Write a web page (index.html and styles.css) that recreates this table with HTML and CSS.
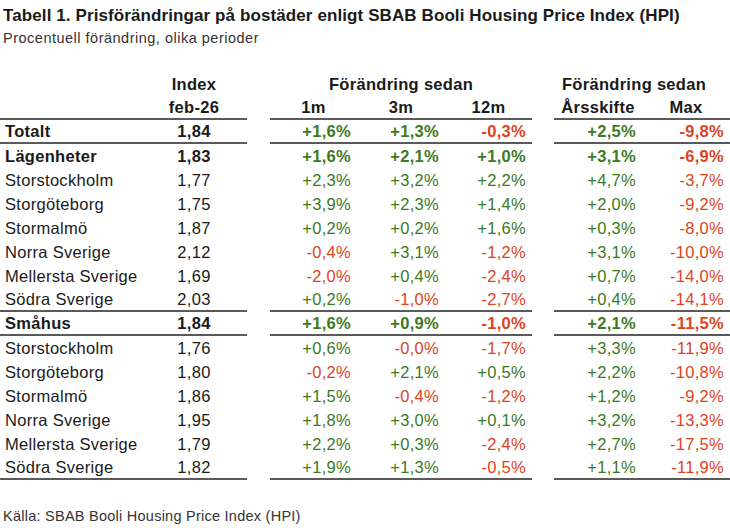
FILE: index.html
```html
<!DOCTYPE html>
<html lang="sv">
<head>
<meta charset="utf-8">
<title>Tabell 1</title>
<link rel="stylesheet" href="styles.css">
</head>
<body>
<div class="page">
  <h1 class="title">Tabell 1. Prisförändringar på bostäder enligt SBAB Booli Housing Price Index (HPI)</h1>
  <p class="subtitle">Procentuell förändring, olika perioder</p>
  <table class="hpi">
    <colgroup>
      <col class="c-label"><col class="c-index"><col class="c-gap1">
      <col class="c-v"><col class="c-v2"><col class="c-v"><col class="c-gap2">
      <col class="c-v2"><col class="c-v2">
    </colgroup>
    <thead>
      <tr class="h1">
        <th></th><th class="ctr">Index</th><th></th>
        <th colspan="3" class="ctr">Förändring sedan</th><th></th>
        <th colspan="2" class="grp2">Förändring sedan</th>
      </tr>
      <tr class="h2">
        <th class="rule"></th><th class="ctr rule">feb-26</th><th></th>
        <th class="ctr rule">1m</th><th class="ctr rule">3m</th><th class="ctr rule">12m</th><th></th>
        <th class="ctr rule">Årsskifte</th><th class="ctr rule">Max</th>
      </tr>
    </thead>
    <tbody>
      <tr class="bold ruled"><td class="lbl">Totalt</td><td class="ctr">1,84</td><td class="gap"></td><td class="up">+1,6%</td><td class="up">+1,3%</td><td class="dn">-0,3%</td><td class="gap"></td><td class="up">+2,5%</td><td class="dn">-9,8%</td></tr>
      <tr class="bold"><td class="lbl">Lägenheter</td><td class="ctr">1,83</td><td class="gap"></td><td class="up">+1,6%</td><td class="up">+2,1%</td><td class="up">+1,0%</td><td class="gap"></td><td class="up">+3,1%</td><td class="dn">-6,9%</td></tr>
      <tr><td class="lbl">Storstockholm</td><td class="ctr">1,77</td><td class="gap"></td><td class="up">+2,3%</td><td class="up">+3,2%</td><td class="up">+2,2%</td><td class="gap"></td><td class="up">+4,7%</td><td class="dn">-3,7%</td></tr>
      <tr><td class="lbl">Storgöteborg</td><td class="ctr">1,75</td><td class="gap"></td><td class="up">+3,9%</td><td class="up">+2,3%</td><td class="up">+1,4%</td><td class="gap"></td><td class="up">+2,0%</td><td class="dn">-9,2%</td></tr>
      <tr><td class="lbl">Stormalmö</td><td class="ctr">1,87</td><td class="gap"></td><td class="up">+0,2%</td><td class="up">+0,2%</td><td class="up">+1,6%</td><td class="gap"></td><td class="up">+0,3%</td><td class="dn">-8,0%</td></tr>
      <tr><td class="lbl">Norra Sverige</td><td class="ctr">2,12</td><td class="gap"></td><td class="dn">-0,4%</td><td class="up">+3,1%</td><td class="dn">-1,2%</td><td class="gap"></td><td class="up">+3,1%</td><td class="dn">-10,0%</td></tr>
      <tr><td class="lbl">Mellersta Sverige</td><td class="ctr">1,69</td><td class="gap"></td><td class="dn">-2,0%</td><td class="up">+0,4%</td><td class="dn">-2,4%</td><td class="gap"></td><td class="up">+0,7%</td><td class="dn">-14,0%</td></tr>
      <tr class="ruled"><td class="lbl">Södra Sverige</td><td class="ctr">2,03</td><td class="gap"></td><td class="up">+0,2%</td><td class="dn">-1,0%</td><td class="dn">-2,7%</td><td class="gap"></td><td class="up">+0,4%</td><td class="dn">-14,1%</td></tr>
      <tr class="bold ruled"><td class="lbl">Småhus</td><td class="ctr">1,84</td><td class="gap"></td><td class="up">+1,6%</td><td class="up">+0,9%</td><td class="dn">-1,0%</td><td class="gap"></td><td class="up">+2,1%</td><td class="dn">-11,5%</td></tr>
      <tr><td class="lbl">Storstockholm</td><td class="ctr">1,76</td><td class="gap"></td><td class="up">+0,6%</td><td class="dn">-0,0%</td><td class="dn">-1,7%</td><td class="gap"></td><td class="up">+3,3%</td><td class="dn">-11,9%</td></tr>
      <tr><td class="lbl">Storgöteborg</td><td class="ctr">1,80</td><td class="gap"></td><td class="dn">-0,2%</td><td class="up">+2,1%</td><td class="up">+0,5%</td><td class="gap"></td><td class="up">+2,2%</td><td class="dn">-10,8%</td></tr>
      <tr><td class="lbl">Stormalmö</td><td class="ctr">1,86</td><td class="gap"></td><td class="up">+1,5%</td><td class="dn">-0,4%</td><td class="dn">-1,2%</td><td class="gap"></td><td class="up">+1,2%</td><td class="dn">-9,2%</td></tr>
      <tr><td class="lbl">Norra Sverige</td><td class="ctr">1,95</td><td class="gap"></td><td class="up">+1,8%</td><td class="up">+3,0%</td><td class="up">+0,1%</td><td class="gap"></td><td class="up">+3,2%</td><td class="dn">-13,3%</td></tr>
      <tr><td class="lbl">Mellersta Sverige</td><td class="ctr">1,79</td><td class="gap"></td><td class="up">+2,2%</td><td class="up">+0,3%</td><td class="dn">-2,4%</td><td class="gap"></td><td class="up">+2,7%</td><td class="dn">-17,5%</td></tr>
      <tr class="ruled"><td class="lbl">Södra Sverige</td><td class="ctr">1,82</td><td class="gap"></td><td class="up">+1,9%</td><td class="up">+1,3%</td><td class="dn">-0,5%</td><td class="gap"></td><td class="up">+1,1%</td><td class="dn">-11,9%</td></tr>
    </tbody>
  </table>
  <p class="source">Källa: SBAB Booli Housing Price Index (HPI)</p>
</div>
</body>
</html>
```

FILE: styles.css
```css
html, body {
  margin: 0;
  padding: 0;
  background: #ffffff;
}

.page {
  width: 730px;
  font-family: "Liberation Sans", Arial, sans-serif;
  color: #1a1a1a;
}

.title {
  margin: 0;
  padding: 6px 0 0 3px;
  font-size: 17px;
  line-height: 20px;
  font-weight: bold;
  letter-spacing: 0.1px;
  white-space: nowrap;
}

.subtitle {
  margin: 3px 0 0 0;
  padding-left: 3px;
  font-size: 14.5px;
  line-height: 18px;
  color: #333333;
  letter-spacing: 0.5px;
}

.hpi {
  margin-top: 25px;
  width: 730px;
  table-layout: fixed;
  border-collapse: separate;
  border-spacing: 0;
  font-size: 16.5px;
  letter-spacing: 0.3px;
}

.c-label { width: 141px; }
.c-index { width: 106px; }
.c-gap1 { width: 23px; }
.c-v { width: 87px; }
.c-v2 { width: 88px; }
.c-gap2 { width: 22px; }

.hpi th {
  font-weight: bold;
  padding: 0;
  line-height: 20px;
  vertical-align: middle;
}

.hpi tr.h1 { height: 24px; }
.hpi tr.h2 { height: 24px; }

.hpi th.rule {
  border-bottom: 2px solid #5a5a5a;
}

.hpi .ctr { text-align: center; }

.hpi th.grp2 {
  text-align: center;
  padding-right: 16px;
}

.hpi tbody tr { height: 24px; }

.hpi td {
  padding: 0 6px 0 0;
  line-height: 20px;
  text-align: right;
  vertical-align: middle;
  white-space: nowrap;
}

.hpi td.lbl {
  text-align: left;
  padding: 0 0 0 5px;
}

.hpi td.ctr {
  text-align: center;
  padding: 0;
}

.hpi td.gap { padding: 0; }

.hpi tr.ruled td {
  border-bottom: 2px solid #5a5a5a;
}

.hpi tr.ruled td.gap {
  border-bottom: 0;
}

.hpi tr.bold td { font-weight: bold; }

.up { color: #3c7a1e; }
.dn { color: #e0421c; }

.source {
  margin: 27px 0 0 0;
  padding-left: 3px;
  font-size: 14.5px;
  line-height: 18px;
  color: #333333;
  letter-spacing: 0.25px;
}
```
